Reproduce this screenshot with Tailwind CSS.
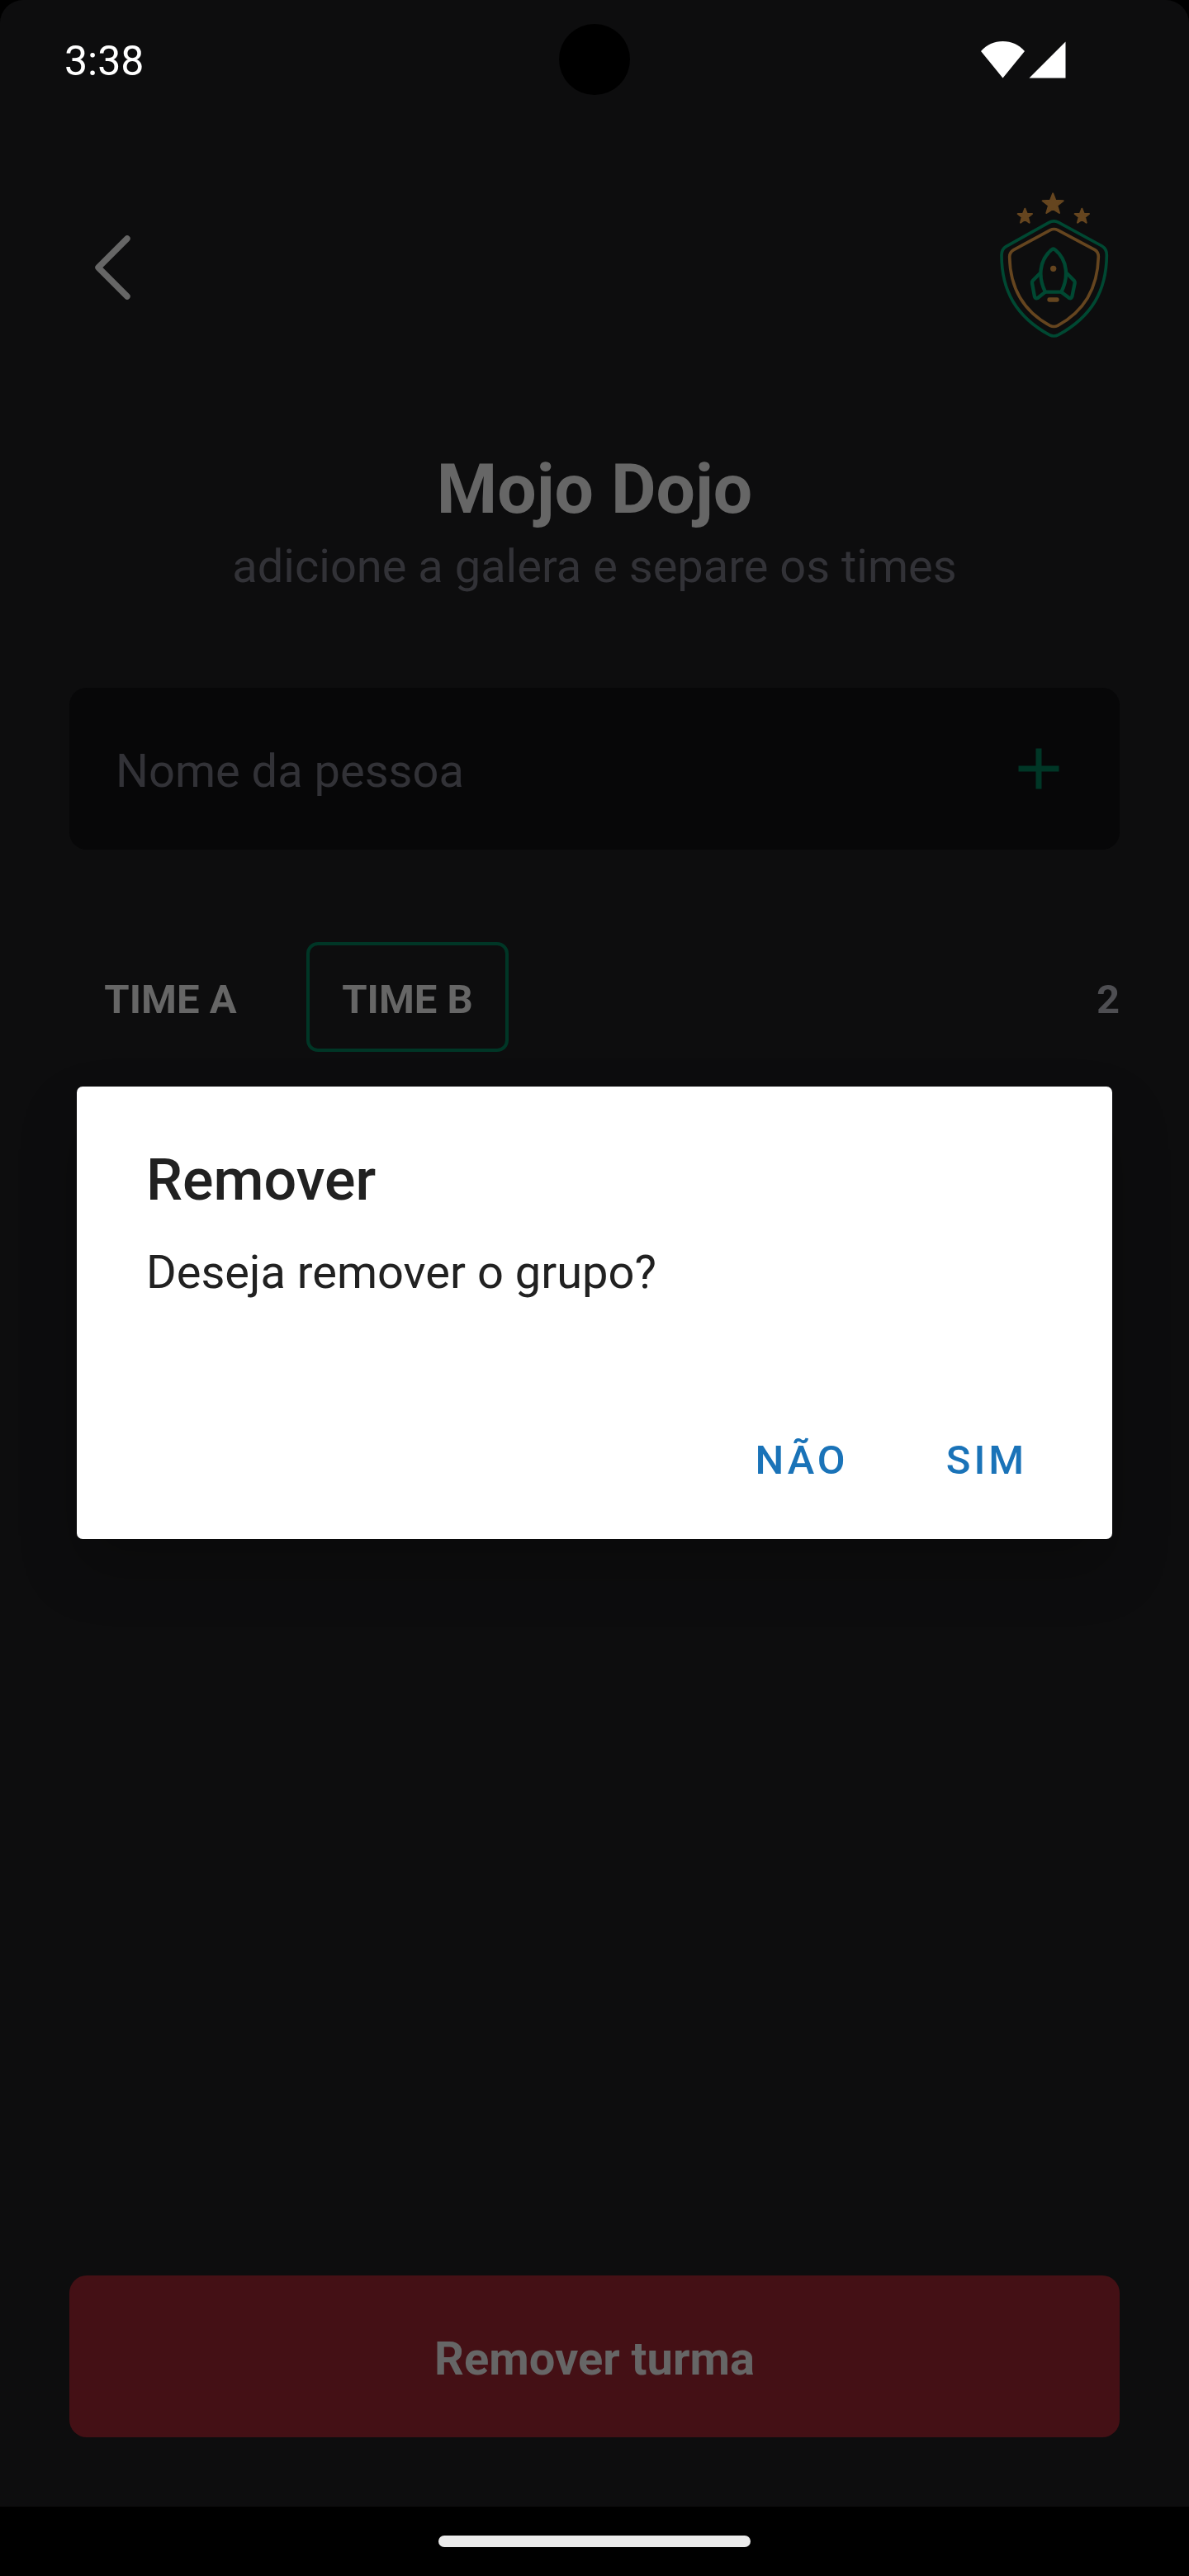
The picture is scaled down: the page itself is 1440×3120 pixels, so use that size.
<!DOCTYPE html>
<html lang="pt-BR">
<head>
<meta charset="utf-8">
<meta name="viewport" content="width=device-width, initial-scale=1">
<title>Mojo Dojo</title>
<script src="https://cdn.jsdelivr.net/npm/@tailwindcss/browser@4"></script>
</head>
<body class="bg-black">
<div class="relative flex min-h-screen flex-col font-['Roboto',sans-serif]">

  <!-- Status bar -->
  <div class="relative flex h-[144px] items-center justify-between rounded-t-[28px] bg-[#0d0d0e] pl-[78px] pr-[149px]">
    <span class="pt-1 text-[50px] leading-[58px] text-white">3:38</span>
    <div class="absolute left-1/2 top-[29px] size-[86px] -translate-x-1/2 rounded-full bg-black"></div>
    <svg class="h-[46px] w-[104px]" viewBox="0 0 104 46" fill="#fff" aria-hidden="true">
      <path d="M1 13C8 5 17 1 27.500 1S47 5 54 13L27.500 45.500Z"/>
      <path d="M103.500 1.500V45.500H59.500Z"/>
    </svg>
  </div>

  <main class="flex grow flex-col bg-[#0d0d0e] px-[84px] pb-[84px] pt-[84px]">
    <header class="flex items-center justify-between">
      <button type="button" aria-label="Voltar">
        <svg class="size-[112px]" viewBox="0 0 256 256" fill="none" stroke="#666" stroke-width="17" stroke-linecap="round" stroke-linejoin="round"><path d="M160 208 80 128l80-80"/></svg>
      </button>
      <svg class="h-[192px] w-[160px]" viewBox="48 54 480 576" fill="none" stroke-linejoin="round" stroke-linecap="round" aria-hidden="true">
        <g fill="#65451f" stroke="#65451f" stroke-width="6">
          <path d="M285.500 73 295 98l28 2-22 17 8 27-23.500-15-23.500 15 8-27-22-17 28-2Z"/>
          <path d="m184 128 7 18 19 1-15 12 5 20-16-11-16 11 5-20-15-12 19-1Z"/>
          <path d="m391 128 7 18 19 1-15 12 5 20-16-11-16 11 5-20-15-12 19-1Z"/>
        </g>
        <path stroke="#004832" stroke-width="11" d="M272 178Q289 169 306 178L464 264Q481 274 481 297C480 425 428 520 305 587Q289 595 273 587C151 520 99 425 99 297Q99 276 115 266Z"/>
        <path stroke="#65451f" stroke-width="11" d="M276 206Q289 199 303 206L438 278Q451 286 451 303C448 418 398 502 303 553Q289 560 275 553C180 502 130 418 128 303Q128 287 143 278Z"/>
        <g stroke="#004832" stroke-width="13">
          <path d="M258 431C232 380 234 317 280 278Q287 271 294 278C341 317 342 380 316 431Z"/>
          <path d="M238 364 212 390Q209 394 210 399L219 448Q222 456 230 453L258 431"/>
          <path d="M337 364 363 390Q366 394 365 399L355 448Q352 456 345 453L316 431"/>
        </g>
        <circle cx="287" cy="346" r="11" fill="#65451f"/>
        <rect x="265" y="451" width="43" height="16" rx="7" fill="#65451f"/>
      </svg>
    </header>

    <h1 class="mt-[113px] text-center text-[84px] font-bold leading-[120px] text-[#666]">Mojo Dojo</h1>
    <p class="text-center text-[56px] leading-[66px] text-[#323237]">adicione a galera e separe os times</p>

    <form class="mt-[114px] flex h-[196px] items-center rounded-[21px] bg-[#070708] px-[56px]">
      <input type="text" aria-label="Nome da pessoa" placeholder="Nome da pessoa" class="min-w-0 grow bg-transparent pt-1.5 text-[56px] leading-[66px] text-[#666] outline-none placeholder:text-[#323237]">
      <button type="button" aria-label="Adicionar">
        <svg class="size-[84px]" viewBox="0 0 24 24" fill="#003626"><path d="M19 13h-6v6h-2v-6H5v-2h6V5h2v6h6v2z"/></svg>
      </button>
    </form>

    <div class="mt-[112px] flex items-center justify-between text-[49px] font-bold leading-[58px]">
      <div class="flex gap-[42px] text-[#666]">
        <button type="button" class="h-[133px] w-[245px] rounded-[14px] pt-1.5">TIME A</button>
        <button type="button" class="h-[133px] w-[245px] rounded-[14px] border-4 border-[#003626] pt-1.5">TIME B</button>
      </div>
      <span class="pt-1.5 text-[#4e4e52]">2</span>
    </div>

    <button type="button" class="mt-auto h-[196px] rounded-[21px] bg-[#441015] pt-1.5 text-[56px] font-bold leading-[66px] text-[#666]">Remover turma</button>
  </main>

  <!-- System navigation handle -->
  <div class="flex h-[84px] items-center justify-center bg-black">
    <div class="h-[14px] w-[378px] rounded-full bg-[#ebebeb]"></div>
  </div>

  <!-- Confirmation dialog -->
  <div class="absolute inset-x-0 bottom-[84px] top-[144px] flex items-center justify-center px-[93px]">
    <div role="dialog" aria-modal="true" aria-labelledby="dialog-title" class="w-full rounded-[7px] bg-white pb-[32px] pt-[72px] text-[#212121] shadow-[0_36px_70px_rgba(0,0,0,0.22)]">
      <h2 id="dialog-title" class="px-[84px] text-[70px] font-medium leading-[82px]">Remover</h2>
      <p class="mt-[38px] px-[84px] text-[56px] leading-[66px]">Deseja remover o grupo?</p>
      <div class="mt-[132px] flex justify-end pr-[40px] text-[49px] font-medium leading-[58px] text-[#1a73b8]">
        <button type="button" class="h-[126px] w-[224px] tracking-[4px]">NÃO</button>
        <button type="button" class="h-[126px] w-[224px] tracking-[4px]">SIM</button>
      </div>
    </div>
  </div>
</div>
</body>
</html>
